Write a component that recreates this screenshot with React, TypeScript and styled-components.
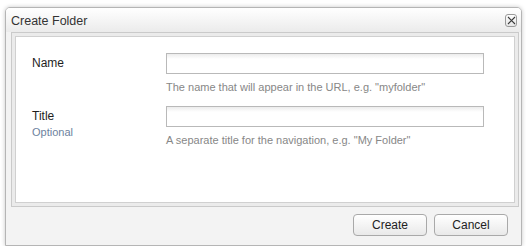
import React from "react";
import styled, { createGlobalStyle } from "styled-components";

const GlobalStyle = createGlobalStyle`
	html, body {
		margin: 0;
		padding: 0;
		background: #ffffff;
	}
	body {
		font-family: "Liberation Sans", Arial, sans-serif;
	}
`;

const Window = styled.section`
	box-sizing: border-box;
	width: 517px;
	height: 239px;
	margin: 7px 0 0 5px;
	display: flex;
	flex-direction: column;
	border: 1px solid #b5b5b5;
	border-radius: 5px 5px 0 0;
	background: #f3f3f3;
	box-shadow: 0 0 4px rgba(0, 0, 0, 0.22);
`;

const TitleBar = styled.header`
	height: 24px;
	display: flex;
	align-items: center;
	justify-content: space-between;
	padding: 0 4px 0 5px;
	border-radius: 4px 4px 0 0;
	background: linear-gradient(#ffffff, #ebebeb);
`;

const Title = styled.h1`
	margin: 0;
	font-size: 12.5px;
	font-weight: normal;
	color: #333333;
	line-height: 16px;
	padding-top: 1px;
`;

const CloseButton = styled.button`
	box-sizing: border-box;
	width: 12px;
	height: 13px;
	padding: 0;
	margin-top: 1px;
	display: flex;
	align-items: center;
	justify-content: center;
	border: 1px solid #9a9a9a;
	border-radius: 3px;
	background: linear-gradient(#fdfdfd, #e6e6e6);
`;

const Body = styled.div`
	padding: 0 2px 0 5px;
`;

const Frame = styled.div`
	box-sizing: border-box;
	height: 175px;
	padding: 3px;
	border: 1px solid #cacaca;
	background: #ebebeb;
`;

const Panel = styled.div`
	box-sizing: border-box;
	height: 100%;
	border: 1px solid #d0d0d0;
	background: #ffffff;
	padding: 16px 0 0 16px;
`;

const Form = styled.div`
	display: grid;
	grid-template-columns: 134px 318px;
	row-gap: 11px;
`;

const LabelCell = styled.div`
	display: flex;
	flex-direction: column;
`;

const Label = styled.label`
	font-size: 12px;
	line-height: 21px;
	color: #1e1e1e;
`;

const Optional = styled.span`
	font-size: 11px;
	line-height: 10px;
	color: #6d829e;
`;

const FieldCell = styled.div`
	display: flex;
	flex-direction: column;
`;

const Input = styled.input`
	box-sizing: border-box;
	height: 21px;
	width: 318px;
	margin: 0;
	border: 1px solid #b9b9b9;
	border-radius: 0;
	background: linear-gradient(#ececec, #ffffff 5px);
	outline: none;
`;

const Hint = styled.p`
	margin: 5px 0 0;
	font-size: 11px;
	line-height: 16px;
	color: #878787;
`;

const Footer = styled.footer`
	flex: 1;
	display: flex;
	align-items: center;
	justify-content: flex-end;
	gap: 7px;
	padding: 0 13px 2px 0;
`;

const Button = styled.button`
	box-sizing: border-box;
	width: 74px;
	height: 22px;
	padding: 0;
	font-family: "Liberation Sans", Arial, sans-serif;
	font-size: 12px;
	color: #222222;
	border: 1px solid #a9a9a9;
	border-radius: 4px;
	background: linear-gradient(#ffffff, #e9e9e9);
`;

const CloseIcon = () => (
	<svg width="9" height="9" viewBox="0 0 9 9">
		<path d="M1 1 L8 8 M8 1 L1 8" stroke="#3a3a3a" strokeWidth="1.1" />
	</svg>
);

export default function App() {
	return (
		<>
			<GlobalStyle />
			<Window>
				<TitleBar>
					<Title>Create Folder</Title>
					<CloseButton aria-label="Close">
						<CloseIcon />
					</CloseButton>
				</TitleBar>
				<Body>
					<Frame>
						<Panel>
							<Form>
								<LabelCell>
									<Label>Name</Label>
								</LabelCell>
								<FieldCell>
									<Input />
									<Hint>The name that will appear in the URL, e.g. "myfolder"</Hint>
								</FieldCell>
								<LabelCell>
									<Label>Title</Label>
									<Optional>Optional</Optional>
								</LabelCell>
								<FieldCell>
									<Input />
									<Hint>A separate title for the navigation, e.g. "My Folder"</Hint>
								</FieldCell>
							</Form>
						</Panel>
					</Frame>
				</Body>
				<Footer>
					<Button>Create</Button>
					<Button>Cancel</Button>
				</Footer>
			</Window>
		</>
	);
}
